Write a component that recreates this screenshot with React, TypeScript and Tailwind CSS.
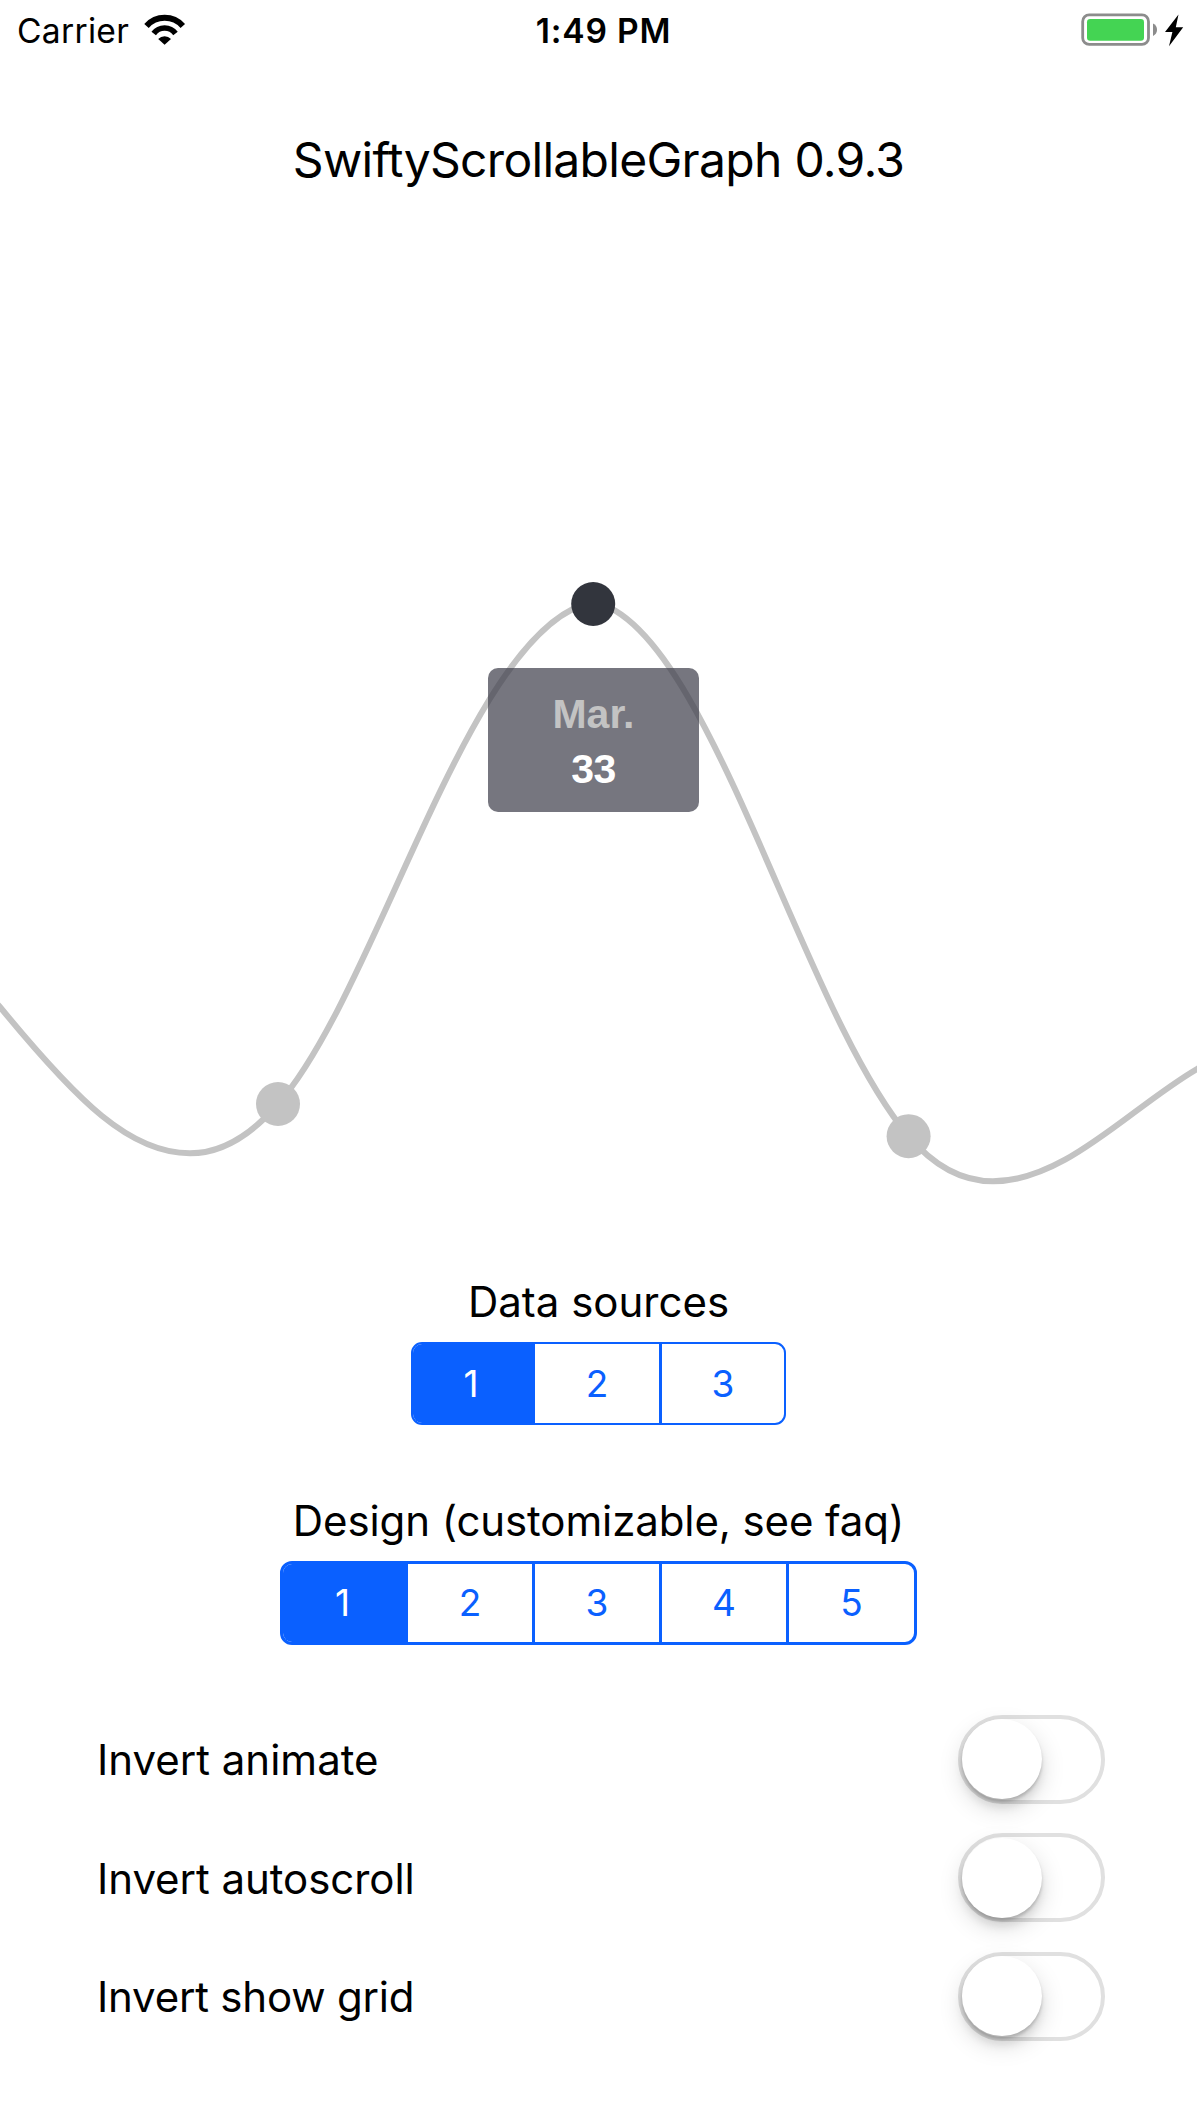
import { useState } from "react";

function StatusBar() {
  return (
    <header className="grid h-[60px] shrink-0 grid-cols-3 items-center text-[33.6px] leading-[60px]">
      <div className="flex items-center pl-[17px]">
        <span className="w-[125px] pt-px tracking-[0.3px]">Carrier</span>
        <svg className="ml-[1px]" width="44" height="60" viewBox="143 0 44 60" fill="none">
          <path d="M146.5 25A24.3 24.3 0 0 1 182.8 25" stroke="black" strokeWidth="6" />
          <path d="M153.7 32.5A13.6 13.6 0 0 1 175.5 32.5" stroke="black" strokeWidth="5.6" />
          <path d="M158.2 38A9 9 0 0 1 171 38L164.6 43.7Z" fill="black" />
        </svg>
      </div>
      <div className="pl-[10px] pt-px text-center font-semibold tracking-[0.8px]">1:49 PM</div>
      <div className="flex items-center justify-end pr-[13px]">
        <svg width="104" height="60" viewBox="1080 0 104 60" fill="none">
          <rect x="1082.7" y="13.9" width="65.8" height="29.5" rx="6.5" stroke="#8c8c8c" strokeWidth="2.8" />
          <rect x="1087" y="18" width="57" height="21.7" rx="3.2" fill="#44d453" />
          <path d="M1153 22.6Q1157 24.5 1157 28.8Q1157 33 1153 35Z" fill="#8c8c8c" />
          <path d="M1178.5 13.5L1165 31H1172.4L1169 45.2L1183.2 26.3H1175.8Z" fill="black" />
        </svg>
      </div>
    </header>
  );
}

function Graph() {
  return (
    <section className="relative h-[1021px] shrink-0">
      <svg width="1197" height="1021" viewBox="0 200 1197 1021" fill="none">
        <path
          d="M-6 1000L0 1007C78 1102 130 1153.3 190 1153.3C222 1153.3 252 1134 278 1104C378 991 470 625 593 602C707 622 800 1008 908.5 1136C932 1164 960 1181.3 993 1181.3C1065 1181.3 1130 1108 1197 1069L1203 1065"
          stroke="#c3c3c3"
          strokeWidth="6"
          strokeLinejoin="round"
        />
        <circle cx="278" cy="1104" r="22" fill="#c3c3c3" />
        <circle cx="593.2" cy="604" r="22" fill="#32353d" />
        <circle cx="908.6" cy="1136.2" r="22" fill="#c3c3c3" />
      </svg>
      <div className="absolute left-[488px] top-[468px] h-[144px] w-[211px] rounded-[10px] bg-[rgba(65,65,77,0.72)] pt-[19px] text-center font-['Liberation_Sans',sans-serif] text-[41px] font-bold leading-[55px]">
        <div className="text-[#c3c3c3]">Mar.</div>
        <div className="tracking-[-0.6px] text-white">33</div>
      </div>
    </section>
  );
}

function Segments({ count, className }: { count: number; className: string }) {
  const [active, setActive] = useState(0);
  return (
    <div className={`grid overflow-hidden border-[#0a60ff] text-[37px] text-[#0a60ff] ${className}`}>
      {Array.from({ length: count }, (_, i) => (
        <button
          key={i}
          onClick={() => setActive(i)}
          className={`flex items-center justify-center ${i > 1 ? "border-l-[3px] border-[#0a60ff]" : ""} ${
            i === 0 ? "pr-[6px]" : ""
          } ${i === active ? "bg-[#0a60ff] text-white" : ""}`}
        >
          {i + 1}
        </button>
      ))}
    </div>
  );
}

function ToggleRow({ label, className }: { label: string; className: string }) {
  const [on, setOn] = useState(false);
  return (
    <div className="flex h-[118.5px] items-center justify-between pl-[97px] pr-[92px]">
      <span className={`pt-[2px] text-[42px] leading-[60px] ${className}`}>{label}</span>
      <button
        role="switch"
        aria-checked={on}
        aria-label={label}
        onClick={() => setOn(!on)}
        className={`flex h-[89px] w-[147px] items-center rounded-full border-4 border-[#e0e0e0] ${
          on ? "justify-end bg-[#44d453]" : "bg-white"
        }`}
      >
        <span className="size-20 rounded-full bg-white shadow-[0_9px_24px_rgba(0,0,0,0.15),0_3px_3px_rgba(0,0,0,0.16),0_9px_9px_rgba(0,0,0,0.08)]" />
      </button>
    </div>
  );
}

export default function App() {
  return (
    <main className="flex h-[2128px] w-[1197px] flex-col overflow-hidden bg-white font-['Inter',sans-serif] text-black">
      <StatusBar />
      <h1 className="h-[140px] shrink-0 pt-[60px] text-center text-[48px] leading-[80px] tracking-[-0.7px]">
        SwiftyScrollableGraph 0.9.3
      </h1>
      <Graph />
      <section className="flex shrink-0 flex-col items-center pt-[51px]">
        <h2 className="h-[70px] text-[42px] leading-[60px]">Data sources</h2>
        <Segments
          count={3}
          className="h-[83px] w-[375px] grid-cols-[122px_124px_125px] rounded-[11px] border-2"
        />
      </section>
      <section className="flex shrink-0 flex-col items-center pt-[66px]">
        <h2 className="h-[70px] text-[42px] leading-[60px] tracking-[-0.1px]">Design (customizable, see faq)</h2>
        <Segments
          count={5}
          className="h-[84px] w-[637px] grid-cols-[125px_124px_127px_127px_128px] rounded-[12px] border-[3px]"
        />
      </section>
      <section className="shrink-0 pt-[55px]">
        <ToggleRow label="Invert animate" className="tracking-normal" />
        <ToggleRow label="Invert autoscroll" className="tracking-[-0.05px]" />
        <ToggleRow label="Invert show grid" className="tracking-[-0.2px]" />
      </section>
    </main>
  );
}
